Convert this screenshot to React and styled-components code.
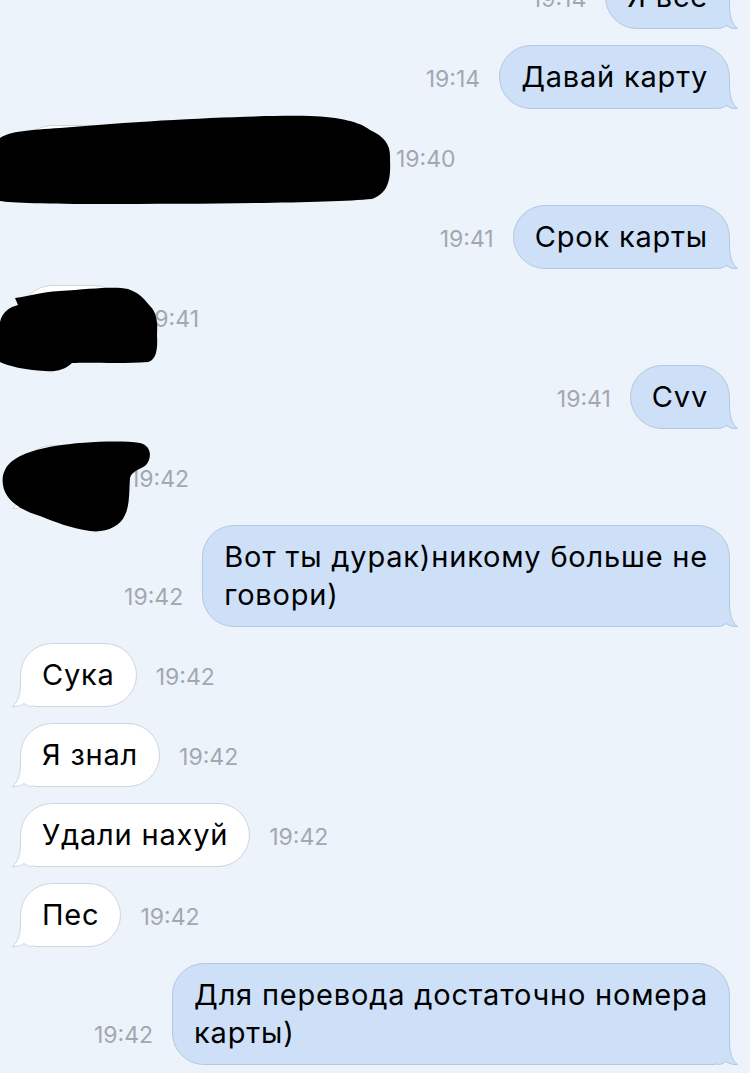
import React from 'react'
import styled, { createGlobalStyle } from 'styled-components'

const GlobalStyle = createGlobalStyle`
    html, body {
        margin: 0;
        padding: 0;
        background: #edf3fb;
        overflow: hidden;
    }
    body {
        font-family: "Inter", "Liberation Sans", sans-serif;
        -webkit-font-smoothing: antialiased;
    }
`

// scribbles drawn over the hidden incoming messages (coords relative to row top)
const blobs = {
    a: 'M0,13 C10,6 30,5 60,3 C150,-5 250,-10 310,-9 C340,-8 360,-3 370,5 C385,12 391,20 390,35 C391,55 388,68 372,74 C330,78 200,79 100,79 C50,79 10,78 0,76 Z',
    b: 'M0,37 C2,27 10,22 18,20 L15,13 C30,11 40,7 60,6 C90,4 115,1 128,4 C140,8 145,15 150,21 C156,27 158,35 157,50 C158,65 156,75 148,77 C120,79 90,77 72,78 C65,85 55,87 45,86 C25,85 8,81 0,77 Z',
    c: 'M5,25 C10,13 30,5 55,1 C80,-3 120,-5 140,-2 C152,1 152,13 146,20 C140,25 132,25 130,33 C129,45 130,60 125,70 C120,82 105,88 90,86 C70,83 55,77 40,71 C20,65 5,55 3,40 C2,33 3,29 5,25 Z',
}

const messages = [
    { id: 1, out: true, time: '19:14', lines: ['Я все'] },
    { id: 2, out: true, time: '19:14', lines: ['Давай карту'] },
    { id: 3, out: false, time: '19:40', hiddenWidth: 357, blob: blobs.a },
    { id: 4, out: true, time: '19:41', lines: ['Срок карты'] },
    { id: 5, out: false, time: '19:41', hiddenWidth: 106, blob: blobs.b },
    { id: 6, out: true, time: '19:41', lines: ['Cvv'] },
    { id: 7, out: false, time: '19:42', hiddenWidth: 91, blob: blobs.c },
    { id: 8, out: true, time: '19:42', lines: ['Вот ты дурак)никому больше не', 'говори)'] },
    { id: 9, out: false, time: '19:42', lines: ['Сука'] },
    { id: 10, out: false, time: '19:42', lines: ['Я знал'] },
    { id: 11, out: false, time: '19:42', lines: ['Удали нахуй'] },
    { id: 12, out: false, time: '19:42', lines: ['Пес'] },
    { id: 13, out: true, time: '19:42', lines: ['Для перевода достаточно номера', 'карты)'] },
]

const colors = {
    out: { bg: '#cde0f8', border: '#b2c7e0' },
    in: { bg: '#ffffff', border: '#cfd5dd' },
}

function Tail({ out }) {
    const c = out ? colors.out : colors.in
    const shape = 'M11.5,0 C11.5,10 13.5,19 19.5,23.5 C15,24 11,22.5 8,20.5 C5.5,22.5 3,23.5 0,23.5'
    return (
        <TailSvg $out={out} width="20" height="24" viewBox="0 0 20 24">
            <path d={'M0,0 L11.5,0 ' + shape.slice(7) + ' Z'} fill={c.bg} />
            <path d={shape} fill="none" stroke={c.border} strokeWidth="1" />
        </TailSvg>
    )
}

function Message({ msg }) {
    return (
        <Row $out={msg.out}>
            <Time>{msg.time}</Time>
            <Bubble $out={msg.out} $w={msg.hiddenWidth}>
                {msg.lines && msg.lines.map((l, i) => (
                    <React.Fragment key={i}>
                        {i > 0 && <br />}
                        {l}
                    </React.Fragment>
                ))}
                <Tail out={msg.out} />
            </Bubble>
            {msg.blob && (
                <Scribble width="750" height="1">
                    <path d={msg.blob} fill="#000" />
                </Scribble>
            )}
        </Row>
    )
}

function App() {
    return (
        <>
            <GlobalStyle />
            <Chat>
                {messages.map((m) => (
                    <Message key={m.id} msg={m} />
                ))}
            </Chat>
        </>
    )
}

const Chat = styled.div`
    display: flex;
    flex-direction: column;
    gap: 16px;
    margin-top: -35px;
`

const Row = styled.div`
    position: relative;
    display: flex;
    flex-direction: ${(p) => (p.$out ? 'row' : 'row-reverse')};
    justify-content: flex-end;
    align-items: flex-end;
    gap: 19px;
    padding: 0 20px;
`

const Time = styled.span`
    font-size: 23px;
    line-height: 38px;
    margin-bottom: 11px;
    color: #a2a8b0;
`

const Bubble = styled.div`
    position: relative;
    box-sizing: border-box;
    ${(p) => (p.$w ? `width: ${p.$w}px; height: 64px;` : '')}
    padding: 12px 21px;
    border: 1px solid ${(p) => (p.$out ? colors.out.border : colors.in.border)};
    background: ${(p) => (p.$out ? colors.out.bg : colors.in.bg)};
    border-radius: 32px;
    ${(p) => (p.$out ? 'border-bottom-right-radius: 16px;' : 'border-bottom-left-radius: 16px;')}
    font-size: 29px;
    letter-spacing: 0.8px;
    line-height: 38px;
    color: #000;
    white-space: nowrap;
`

const TailSvg = styled.svg`
    position: absolute;
    bottom: -1px;
    ${(p) => (p.$out ? 'right: -9px;' : 'left: -9px; transform: scaleX(-1);')}
    overflow: visible;
`

const Scribble = styled.svg`
    position: absolute;
    left: 0;
    top: 0;
    overflow: visible;
    pointer-events: none;
`

export default App
